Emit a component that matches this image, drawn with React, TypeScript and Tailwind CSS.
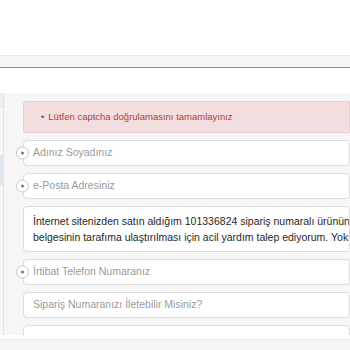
import React from "react";

function Radio() {
  return (
    <span className="absolute left-[-8px] top-1/2 -translate-y-1/2 w-[13px] h-[13px] rounded-full border border-[#c8c8c8] bg-white flex items-center justify-center">
      <span className="w-[3px] h-[3px] rounded-full bg-[#777]" />
    </span>
  );
}

function Field({ text, radio }: { text: string; radio?: boolean }) {
  return (
    <div className="relative shrink-0 h-[26px] bg-white border border-[#dcdcdc] rounded-[4px] flex items-center pl-[9px] text-[10.5px] text-[#9a9a9a]">
      {radio && <Radio />}
      <span className="whitespace-nowrap">{text}</span>
    </div>
  );
}

export default function App() {
  return (
    <div className="w-[350px] h-[350px] overflow-hidden bg-white" style={{ fontFamily: '"Liberation Sans", Arial, sans-serif' }}>
      <div className="h-[55px] bg-white" />
      <div className="h-[13px] bg-[#f5f5f5] border-t border-[#e6e6e6] border-b border-b-[#7d9c92]" />
      <div className="h-[25px] bg-white" />
      <div className="h-[242px] bg-[#f6f6f6] flex overflow-hidden">
        <div className="w-[4px] shrink-0 border-r border-[#e2e2e2] flex flex-col">
          <div className="h-[14px] border-b border-[#e2e2e2] bg-[#f0f0f0]" />
          <div className="h-[48px]" />
          <div className="h-[30px] bg-[#dfe6ef]" />
        </div>
        <div className="flex-1 pl-[19px] pt-[8px] flex flex-col gap-[7px] min-w-0">
          <div className="shrink-0 h-[32px] bg-[#f2dede] border border-[#ebccd1] rounded-l-[3px] flex items-center pl-[17px] text-[9.5px] text-[#a94442] whitespace-nowrap">
            <span className="mr-[4px]">•</span>Lütfen captcha doğrulamasını tamamlayınız
          </div>
          <Field text="Adınız Soyadınız" radio />
          <Field text="e-Posta Adresiniz" radio />
          <div className="shrink-0 h-[46px] bg-white border border-[#dcdcdc] rounded-[4px] pl-[9px] pt-[6px] text-[10.5px] leading-[16px] text-[#262626] whitespace-nowrap overflow-hidden">
            <div>İnternet sitenizden satın aldığım 101336824 sipariş numaralı ürünün fatura</div>
            <div>belgesinin tarafıma ulaştırılması için acil yardım talep ediyorum. Yoksa</div>
          </div>
          <Field text="İrtibat Telefon Numaranız" radio />
          <Field text="Sipariş Numaranızı İletebilir Misiniz?" />
          <div className="shrink-0 h-[26px] bg-white border border-[#dcdcdc] rounded-[4px]" />
        </div>
      </div>
      <div className="h-[4px] bg-white" />
      <div className="h-[11px] bg-[#f5f5f5] border-t border-[#ececec]" />
    </div>
  );
}
